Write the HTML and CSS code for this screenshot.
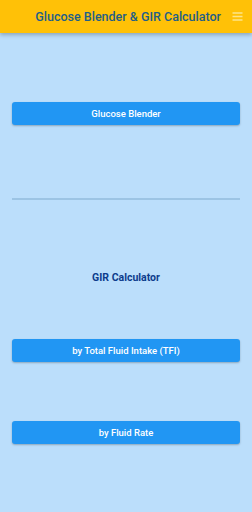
FILE: index.html
```html
<!DOCTYPE html>
<html>
<head>
  <meta charset="UTF-8">
  <link rel="stylesheet" href="styles.css">
</head>
<body>
  <header class="app-bar">
    <h1 class="app-title">Glucose Blender &amp; GIR Calculator</h1>
    <button class="menu-btn" aria-label="Menu">
      <svg viewBox="0 0 11 9" width="11" height="9">
        <path d="M0.5 1h10M0.5 4.5h10M0.5 8h10" stroke="#fde58a" stroke-width="1.5" fill="none"/>
      </svg>
    </button>
  </header>

  <main class="content">
    <button class="action blender">Glucose Blender</button>
    <hr class="divider">
    <h2 class="section-title">GIR Calculator</h2>
    <button class="action tfi">by Total Fluid Intake (TFI)</button>
    <button class="action rate">by Fluid Rate</button>
  </main>
</body>
</html>
```

FILE: styles.css
```css
:root {
  --bg: #bbdefb;
  --bar: #ffc107;
  --btn: #2196f3;
  --title: #1f5f87;
  --heading: #0d3c8c;
}

body {
  margin: 0;
  width: 252px;
  height: 512px;
  background: var(--bg);
  font-family: Roboto, "Noto Sans", sans-serif;
  overflow: hidden;
}

.app-bar {
  height: 33px;
  background: var(--bar);
  display: flex;
  align-items: center;
  justify-content: flex-end;
  padding: 0 9px 0 0;
  box-shadow: 0 2px 4px rgba(0, 0, 0, 0.25);
  box-sizing: border-box;
}

.app-title {
  margin: 0 11px 0 0;
  font-size: 12.5px;
  font-weight: 500;
  color: var(--title);
}

.menu-btn {
  background: none;
  border: 0;
  padding: 0;
  width: 11px;
  height: 14px;
  display: flex;
  align-items: center;
  justify-content: center;
}

.content {
  padding: 0 12px;
  display: flex;
  flex-direction: column;
}

.action {
  height: 23px;
  border: 0;
  border-radius: 3px;
  background: var(--btn);
  color: #fff;
  font-family: Roboto, sans-serif;
  font-size: 9.5px;
  font-weight: 500;
  box-shadow: 0 1px 2px rgba(0, 0, 0, 0.25);
  padding: 0;
}

.blender {
  margin-top: 69px;
}

.divider {
  margin: 73px 0 0;
  border: 0;
  height: 2px;
  background: #9cc4e4;
}

.section-title {
  margin: 72px 0 0;
  text-align: center;
  font-size: 10.5px;
  font-weight: 700;
  color: var(--heading);
  line-height: 12px;
}

.tfi {
  margin-top: 55px;
}

.rate {
  margin-top: 59px;
}
```
